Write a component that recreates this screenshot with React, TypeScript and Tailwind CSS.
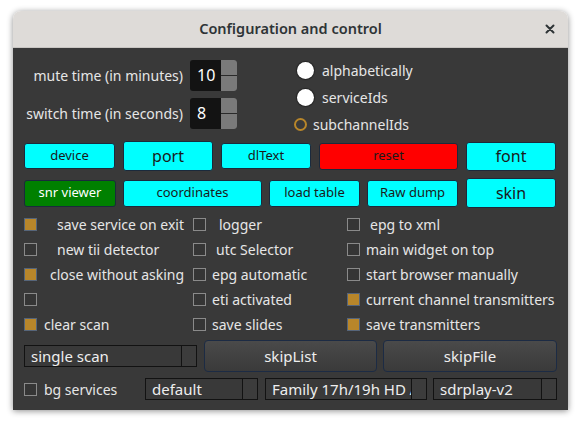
import React from "react";

type CbItem = { checked: boolean; label: string; ml: string };

const grid: CbItem[][] = [
  [
    { checked: true, label: "save service on exit", ml: "ml-[20px]" },
    { checked: false, label: "logger", ml: "ml-[13px]" },
    { checked: false, label: "epg to xml", ml: "ml-[10px]" },
  ],
  [
    { checked: false, label: "new tii detector", ml: "ml-[20px]" },
    { checked: false, label: "utc Selector", ml: "ml-[10px]" },
    { checked: false, label: "main widget on top", ml: "ml-[6px]" },
  ],
  [
    { checked: true, label: "close without asking", ml: "ml-[13px]" },
    { checked: false, label: "epg automatic", ml: "ml-[6px]" },
    { checked: false, label: "start browser manually", ml: "ml-[6px]" },
  ],
  [
    { checked: false, label: "", ml: "ml-[6px]" },
    { checked: false, label: "eti activated", ml: "ml-[6px]" },
    { checked: true, label: "current channel transmitters", ml: "ml-[6px]" },
  ],
  [
    { checked: true, label: "clear scan", ml: "ml-[7px]" },
    { checked: false, label: "save slides", ml: "ml-[6px]" },
    { checked: true, label: "save transmitters", ml: "ml-[6px]" },
  ],
];

function Cb({ checked }: { checked: boolean }) {
  return (
    <span
      className={
        checked
          ? "w-[13px] h-[13px] shrink-0 border border-[#56657a] bg-[#b8862a]"
          : "w-[13px] h-[13px] shrink-0 border border-[#8a8a8a] bg-[#353535]"
      }
    />
  );
}

function Spin({ value }: { value: string }) {
  return (
    <div className="flex h-[31px] w-[47px] rounded-[3px] bg-[#131313] overflow-hidden">
      <span className="flex-1 pl-[7px] text-[16px] leading-[31px] text-white">{value}</span>
      <div className="flex w-[16px] flex-col bg-[#7a7a7a]">
        <span className="flex-1 border-b border-[#2a2a2a]" />
        <span className="flex-1" />
      </div>
    </div>
  );
}

function Combo({ text, w }: { text: string; w: string }) {
  return (
    <div className={`flex h-[22px] border border-[#121212] bg-[#393939] ${w}`}>
      <span className="flex-1 overflow-hidden whitespace-nowrap pl-[6px] text-[15px] leading-[20px] text-[#eeeeee]">
        {text}
      </span>
      <span className="w-[15px] shrink-0 border-l border-[#121212] bg-[#3c3c3c]" />
    </div>
  );
}

const cyanSmall =
  "flex items-center justify-center rounded-[3px] border border-[#1b2a3c] bg-[#00ffff] text-[13px] text-[#1a1a1a]";
const cyanBig =
  "flex items-center justify-center rounded-[3px] border border-[#1b2a3c] bg-[#00ffff] text-[16px] text-[#1a1a1a]";

export default function App() {
  return (
    <div className="min-h-[427px] w-[581px] bg-white pt-[11px] pl-[13px] font-['Noto_Sans',sans-serif]">
      <div className="w-[555px] overflow-hidden rounded-t-[8px] shadow-[0_1px_6px_rgba(0,0,0,0.45)]">
        <div className="grid h-[37px] grid-cols-[1fr_auto_1fr] items-center bg-[#dedbd8] border-b border-[#c8c5c2]">
          <span />
          <span className="text-[14.5px] font-semibold text-[#2e3436]">Configuration and control</span>
          <span className="flex justify-end pr-[13px]">
            <svg width="10" height="10" viewBox="0 0 10 10">
              <path d="M1.5 1.5 L8.5 8.5 M8.5 1.5 L1.5 8.5" stroke="#2e3436" strokeWidth="2" strokeLinecap="round" />
            </svg>
          </span>
        </div>
        <div className="bg-[#393939] px-[11px] pt-[12px] pb-[10px] text-[#e6e6e6]">
          {/* top section */}
          <div className="flex h-[81px] items-start">
            <div className="flex flex-col gap-[7px]">
              <div className="flex h-[31px] items-center">
                <span className="w-[166px] pr-[7px] text-right text-[14px] whitespace-nowrap">mute time (in minutes)</span>
                <Spin value="10" />
              </div>
              <div className="flex h-[31px] items-center">
                <span className="w-[166px] pr-[7px] text-right text-[14px] whitespace-nowrap">switch time (in seconds)</span>
                <Spin value="8" />
              </div>
            </div>
            <div className="-mt-[3px] ml-[60px] flex flex-col">
              <div className="flex h-[27px] items-center">
                <span className="h-[17px] w-[17px] rounded-full bg-white shadow-[0_0_1px_1px_rgba(0,0,0,0.4)]" />
                <span className="ml-[8px] text-[14px]">alphabetically</span>
              </div>
              <div className="flex h-[27px] items-center">
                <span className="h-[17px] w-[17px] rounded-full bg-white shadow-[0_0_1px_1px_rgba(0,0,0,0.4)]" />
                <span className="ml-[8px] text-[14px]">serviceIds</span>
              </div>
              <div className="-ml-[3px] flex h-[27px] items-center">
                <span className="h-[13px] w-[13px] rounded-full border-2 border-[#b8862a] bg-[#3a3a3a]" />
                <span className="ml-[6px] text-[14px]">subchannelIds</span>
              </div>
            </div>
          </div>

          {/* button row 1 */}
          <div className="flex h-[30px] items-center gap-[8px]">
            <div className={`${cyanSmall} h-[26px] w-[91px]`}>device</div>
            <div className={`${cyanBig} h-[30px] w-[90px]`}>port</div>
            <div className={`${cyanSmall} h-[26px] w-[90px]`}>dlText</div>
            <div className="flex h-[27px] w-[139px] items-center justify-center rounded-[3px] border border-[#1b2a3c] bg-[#ff0000] text-[13px] text-[#1a1a1a]">
              reset
            </div>
            <div className={`${cyanBig} h-[29px] w-[90px]`}>font</div>
          </div>

          {/* button row 2 */}
          <div className="mt-[7px] flex h-[30px] items-center gap-[7px]">
            <div className="flex h-[27px] w-[92px] items-center justify-center rounded-[3px] border border-[#1b2a3c] bg-[#008000] text-[13px] text-white">
              snr viewer
            </div>
            <div className={`${cyanSmall} h-[27px] w-[139px]`}>coordinates</div>
            <div className={`${cyanSmall} h-[27px] w-[91px]`}>load table</div>
            <div className={`${cyanSmall} h-[27px] w-[91px]`}>Raw dump</div>
            <div className={`${cyanBig} ml-[1px] h-[30px] w-[90px]`}>skin</div>
          </div>

          {/* checkbox grid */}
          <div className="mt-[4px] grid grid-cols-[169px_154px_1fr]">
            {grid.map((row, ri) =>
              row.map((c, ci) => (
                <div key={`${ri}-${ci}`} className="flex h-[25px] items-center">
                  <Cb checked={c.checked} />
                  {c.label && (
                    <span className={`${c.ml} whitespace-nowrap text-[14px]`}>{c.label}</span>
                  )}
                </div>
              ))
            )}
          </div>

          {/* bottom row 1 */}
          <div className="mt-[3px] flex h-[32px] items-center">
            <Combo text="single scan" w="w-[173px]" />
            <div className="ml-[7px] flex h-[32px] w-[173px] items-center justify-center rounded-[4px] border border-[#1c2b44] bg-gradient-to-b from-[#4a4a4a] to-[#3a3a3a] text-[15px] text-[#eeeeee]">
              skipList
            </div>
            <div className="ml-[6px] flex h-[32px] w-[174px] items-center justify-center rounded-[4px] border border-[#1c2b44] bg-gradient-to-b from-[#4a4a4a] to-[#3a3a3a] text-[15px] text-[#eeeeee]">
              skipFile
            </div>
          </div>

          {/* bottom row 2 */}
          <div className="mt-[6px] flex h-[22px] items-center">
            <Cb checked={false} />
            <span className="ml-[7px] w-[101px] text-[14px]">bg services</span>
            <Combo text="default" w="w-[113px]" />
            <div className="ml-[7px]">
              <Combo text="Family 17h/19h HD Audio" w="w-[162px]" />
            </div>
            <div className="ml-[6px]">
              <Combo text="sdrplay-v2" w="w-[124px]" />
            </div>
          </div>
        </div>
      </div>
    </div>
  );
}
